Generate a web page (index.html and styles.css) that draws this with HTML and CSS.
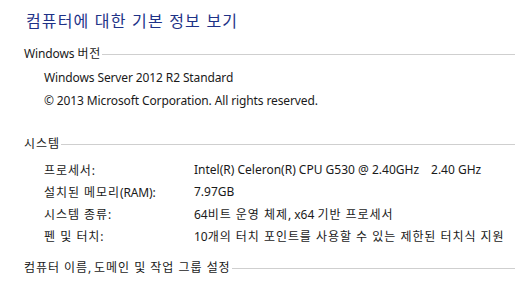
FILE: index.html
```html
<!DOCTYPE html>
<html lang="ko">
<head>
<meta charset="utf-8">
<title>시스템</title>
<link rel="stylesheet" href="styles.css">
</head>
<body>
<div class="page">
  <h1 class="title">컴퓨터에 대한 기본 정보 보기</h1>

  <div class="section-head sec-windows"><span>Windows <span class="ko">버전</span></span></div>
  <div class="version">
    <div class="line">Windows Server 2012 R2 Standard</div>
    <div class="line">© 2013 Microsoft Corporation. All rights reserved.</div>
  </div>

  <div class="section-head sec-system"><span class="ko">시스템</span></div>
  <div class="props">
    <div class="label"><span class="ko">프로세서</span>:</div>
    <div class="value">Intel(R) Celeron(R) CPU G530 @ 2.40GHz<span class="gap">2.40 GHz</span></div>
    <div class="label"><span class="ko">설치된 메모리</span>(RAM):</div>
    <div class="value">7.97GB</div>
    <div class="label"><span class="ko">시스템 종류</span>:</div>
    <div class="value">64<span class="ko">비트 운영 체제</span>, x64 <span class="ko">기반 프로세서</span></div>
    <div class="label"><span class="ko">펜 및 터치</span>:</div>
    <div class="value">10<span class="ko">개의 터치 포인트를 사용할 수 있는 제한된 터치식 지원</span></div>
  </div>

  <div class="section-head sec-name"><span><span class="ko">컴퓨터 이름</span>, <span class="ko">도메인 및 작업 그룹 설정</span></span></div>
</div>
</body>
</html>
```

FILE: styles.css
```css
html, body {
  margin: 0;
  padding: 0;
  background: #ffffff;
}

body {
  font-family: "Noto Sans", "Noto Sans CJK KR", sans-serif;
  font-size: 12px;
  color: #1a1a1a;
  letter-spacing: -0.12px;
  overflow: hidden;
}

.ko {
  font-family: "Noto Sans CJK KR", sans-serif;
  letter-spacing: 0.9px;
}

.page {
  padding: 10px 0 0 24px;
}

.title {
  margin: 0;
  font-family: "Noto Sans CJK KR", sans-serif;
  font-size: 16px;
  font-weight: normal;
  line-height: 20px;
  letter-spacing: 1.1px;
  color: #1e3287;
  padding-left: 2px;
}

.section-head {
  display: flex;
  align-items: center;
  line-height: 22px;
  height: 22px;
  white-space: nowrap;
}

.section-head::after {
  content: "";
  flex: 1;
  height: 1px;
  background: #cfcfcf;
  margin-left: 1px;
  position: relative;
  top: 1px;
}

.sec-windows { margin-top: 12px; }
.sec-system { margin-top: 20px; }
.sec-name { margin-top: 9px; }

.version {
  margin-top: 2px;
  padding-left: 20px;
}

.version .line {
  line-height: 23px;
}

.props {
  margin-top: 5px;
  padding-left: 20px;
  display: grid;
  grid-template-columns: 150px auto;
  grid-auto-rows: 22px;
  line-height: 22px;
}

.value {
  white-space: nowrap;
  letter-spacing: 0;
}

.gap {
  margin-left: 12px;
}
```
